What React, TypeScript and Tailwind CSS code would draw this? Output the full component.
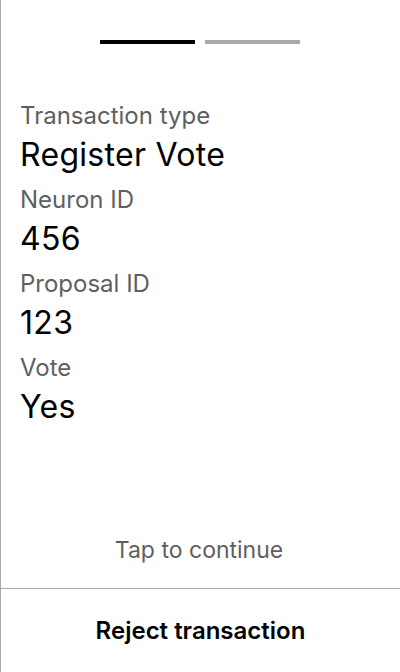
const fields = [
  { label: "Transaction type", value: "Register Vote" },
  { label: "Neuron ID", value: "456" },
  { label: "Proposal ID", value: "123" },
  { label: "Vote", value: "Yes" },
];

export default function App() {
  return (
    <div
      className="flex h-[672px] w-[400px] flex-col border-l border-[#aaaaaa] bg-white"
      style={{ fontFamily: "Inter, 'Noto Sans', sans-serif" }}
    >
      {/* Step indicator */}
      <div className="flex justify-center gap-[10px] pr-[1px] pt-[40px]">
        <div className="h-[4px] w-[95px] bg-black" />
        <div className="h-[4px] w-[95px] bg-[#aaaaaa]" />
      </div>

      {/* Fields */}
      <div className="flex flex-1 flex-col gap-[13px] px-[19px] pt-[58px]">
        {fields.map((f) => (
          <div key={f.label} className="flex flex-col gap-[7px]">
            <span className="text-[24px] leading-[28px] text-[#5f5f5f]">{f.label}</span>
            <span className="text-[32px] leading-[36px] tracking-[0.3px] text-black">{f.value}</span>
          </div>
        ))}
      </div>

      <div className="pb-[24px] pr-[3px] text-center text-[23px] leading-[28px] text-[#5f5f5f]">
        Tap to continue
      </div>

      <button className="h-[84px] w-full border-t border-[#aaaaaa] text-[24px] font-semibold text-black">
        Reject transaction
      </button>
    </div>
  );
}
